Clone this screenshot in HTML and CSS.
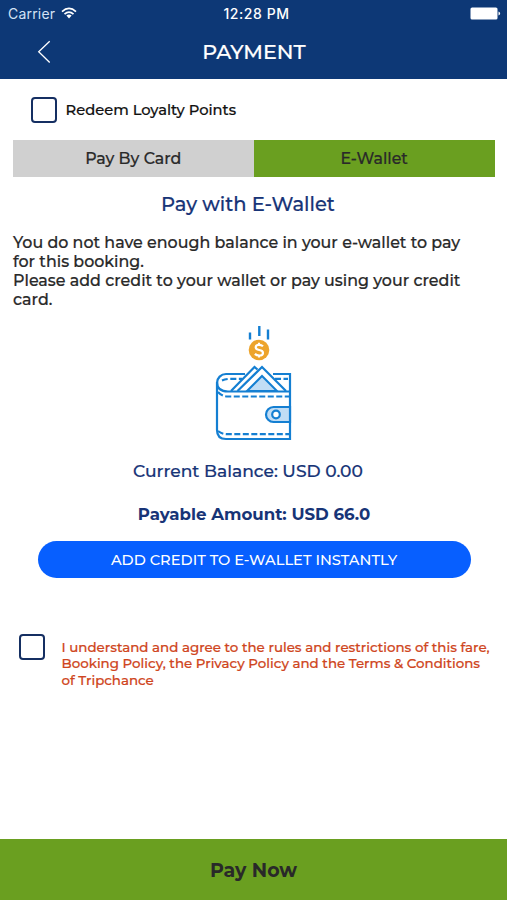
FILE: index.html
```html
<!DOCTYPE html>
<html lang="en">
<head>
<meta charset="utf-8">
<title>Payment</title>
<link rel="stylesheet" href="styles.css">
</head>
<body>
<div class="screen">
  <header class="top">
    <div class="status">
      <div class="carrier"><span>Carrier</span>
        <svg class="wifi" viewBox="0 0 16 12"><g fill="none" stroke="#fff" stroke-width="1.7"><path d="M1 4.6Q8-1.8 15 4.6"/><path d="M3.5 7.2Q8 3 12.5 7.2"/></g><path fill="#fff" d="M5.4 8.6Q8 6.6 10.6 8.6L8 11.4Z"/></svg>
      </div>
      <span class="time">12:28 PM</span>
      <svg class="battery" viewBox="0 0 31 13"><rect x=".5" y=".5" width="27" height="12" rx="1.6" fill="#fff"/><path d="M28.500 4.600q1.600.3 1.600 1.900t-1.600 1.900z" fill="#fff"/></svg>
    </div>
    <div class="nav">
      <svg class="back" viewBox="0 0 14 24"><path d="M12.700 1.200 1.700 11.700l11 10.800" fill="none" stroke="#fff" stroke-width="1.300"/></svg>
      <h1>PAYMENT</h1>
    </div>
  </header>
  <main>
    <label class="redeem"><span class="box"></span><span>Redeem Loyalty Points</span></label>
    <div class="tabs">
      <div class="tab">Pay By Card</div>
      <div class="tab active">E-Wallet</div>
    </div>
    <h2>Pay with E-Wallet</h2>
    <p class="message">You do not have enough balance in your e-wallet to pay<br>for this booking.<br>Please add credit to your wallet or pay using your credit<br>card.</p>
    <svg class="wallet" viewBox="0 0 80 118">
      <g fill="none" stroke="#147fd2" stroke-width="2.200">
        <path d="M36 7.500v7M45.300 1v10M54 4.500v10" stroke-width="2.400"/>
        <path d="M31 49H12a9 9 0 0 0-9 9v47q0 9 9 9h64V49H59"/>
        <path d="M3 57q0 9.500 11 9.500h62"/>
        <path d="M17 66 40.500 42l3 2.500M23.500 66 48 42l24 24"/>
        <path d="M4 67q4 4.500 10 4.500h62M4 106q4 3.200 9 3.200h63M8 55.500q4-1.700 9-1.700h11M61 53.800h13" stroke-dasharray="6 2.500"/>
        <path d="M76 82H59.500a7 7 0 0 0 0 15H76z" fill="#c1ddf5"/>
        <circle cx="62" cy="89.500" r="3.800" fill="#fff"/>
      </g>
      <path d="M33 66 48 51l15 15z" fill="#c1ddf5" stroke="#147fd2" stroke-width="2"/>
      <circle cx="45" cy="25" r="10.300" fill="#eda42c"/>
      <path d="M49 21.300q-1.500-1.500-4-1.500-3.300 0-3.300 2.500 0 2.200 3.500 2.700 3.800.6 3.800 2.900 0 2.600-3.800 2.600-2.700 0-4.300-1.600M45 17.700v2.500M45 30v2.400" fill="none" stroke="#fff" stroke-width="2.200"/>
    </svg>
    <div class="balance">Current Balance: USD 0.00</div>
    <div class="amount">Payable Amount: USD 66.0</div>
    <div class="credit">ADD CREDIT TO E-WALLET INSTANTLY</div>
    <label class="terms"><span class="box"></span><span class="terms-text">I understand and agree to the rules and restrictions of this fare,<br>Booking Policy, the Privacy Policy and the Terms &amp; Conditions<br>of Tripchance</span></label>
  </main>
  <footer>Pay Now</footer>
</div>
</body>
</html>
```
FILE: styles.css
```css
* { box-sizing: border-box; margin: 0; }
body { font-family: Montserrat, Inter, sans-serif; font-weight: 500; color: #292929; background: #fff; white-space: nowrap; -webkit-text-stroke: .2px; }
.screen { height: 900px; display: flex; flex-direction: column; }
.top { height: 79px; background: #0d3876; color: #fff; }
.status { height: 27px; display: grid; grid-template-columns: 1fr auto 1fr; align-items: center; padding: 0 6px 0 8px; font-family: Inter, sans-serif; font-size: 14px; -webkit-text-stroke: 0; }
.carrier { display: flex; align-items: center; gap: 6px; color: #d3e2f5; font-weight: 400; font-size: 14px; letter-spacing: .2px; }
.wifi { width: 16px; height: 12px; margin-top: -2px; }
.time { letter-spacing: .55px; padding-left: 4px; }
.battery { width: 31px; height: 13px; justify-self: end; }
.nav { height: 50px; display: grid; grid-template-columns: 50px 1fr 50px; align-items: center; }
.back { width: 14px; height: 24px; margin-left: 37px; }
h1 { font-size: 20.600px; font-weight: 500; text-align: center; line-height: 26px; padding-left: 1px; }
main { flex: 1; padding: 18px 12px 0 13px; }
.box { width: 26px; height: 26px; flex: none; border: 2px solid #152f62; border-radius: 4px; }
.redeem { display: flex; align-items: center; gap: 9px; height: 26px; margin-left: 17.500px; color: #111; font-size: 14.700px; }
.tabs { display: grid; grid-template-columns: 240.500px 1fr; height: 36.500px; margin-top: 17px; font-size: 15.800px; }
.tab { background: #d0d0d0; display: flex; align-items: center; justify-content: center; padding-top: 1px; }
.active { background: #6a9f20; }
h2 { font-size: 19.500px; line-height: 26px; font-weight: 500; color: #173477; text-align: center; margin: 14.500px 12px 0 0; }
.message { margin-top: 15.500px; font-size: 15.880px; line-height: 19.300px; }
.wallet { display: block; width: 80px; height: 118px; margin: 15.300px 0 0 201px; }
.balance, .amount { text-align: center; color: #173477; font-size: 17.100px; line-height: 24px; padding-right: 12px; }
.balance { margin-top: 16.500px; }
.amount { margin-top: 19px; font-size: 16.600px; font-weight: 700; padding-right: 0; -webkit-text-stroke: 0; }
.credit { width: 433px; height: 37px; margin: 15px 0 0 24.500px; border-radius: 19px; background: #075fff; color: #fff; display: flex; align-items: center; justify-content: center; font-size: 14.630px; -webkit-text-stroke: 0; }
.terms { display: flex; gap: 17px; margin: 56px 0 0 5.500px; font-size: 13.400px; line-height: 16.300px; color: #cf4520; }
.terms-text { padding-top: 4.500px; }
footer { height: 61px; padding-top: 1px; background: #6a9f20; display: flex; align-items: center; justify-content: center; font-size: 19px; font-weight: 700; -webkit-text-stroke: 0; }
```
